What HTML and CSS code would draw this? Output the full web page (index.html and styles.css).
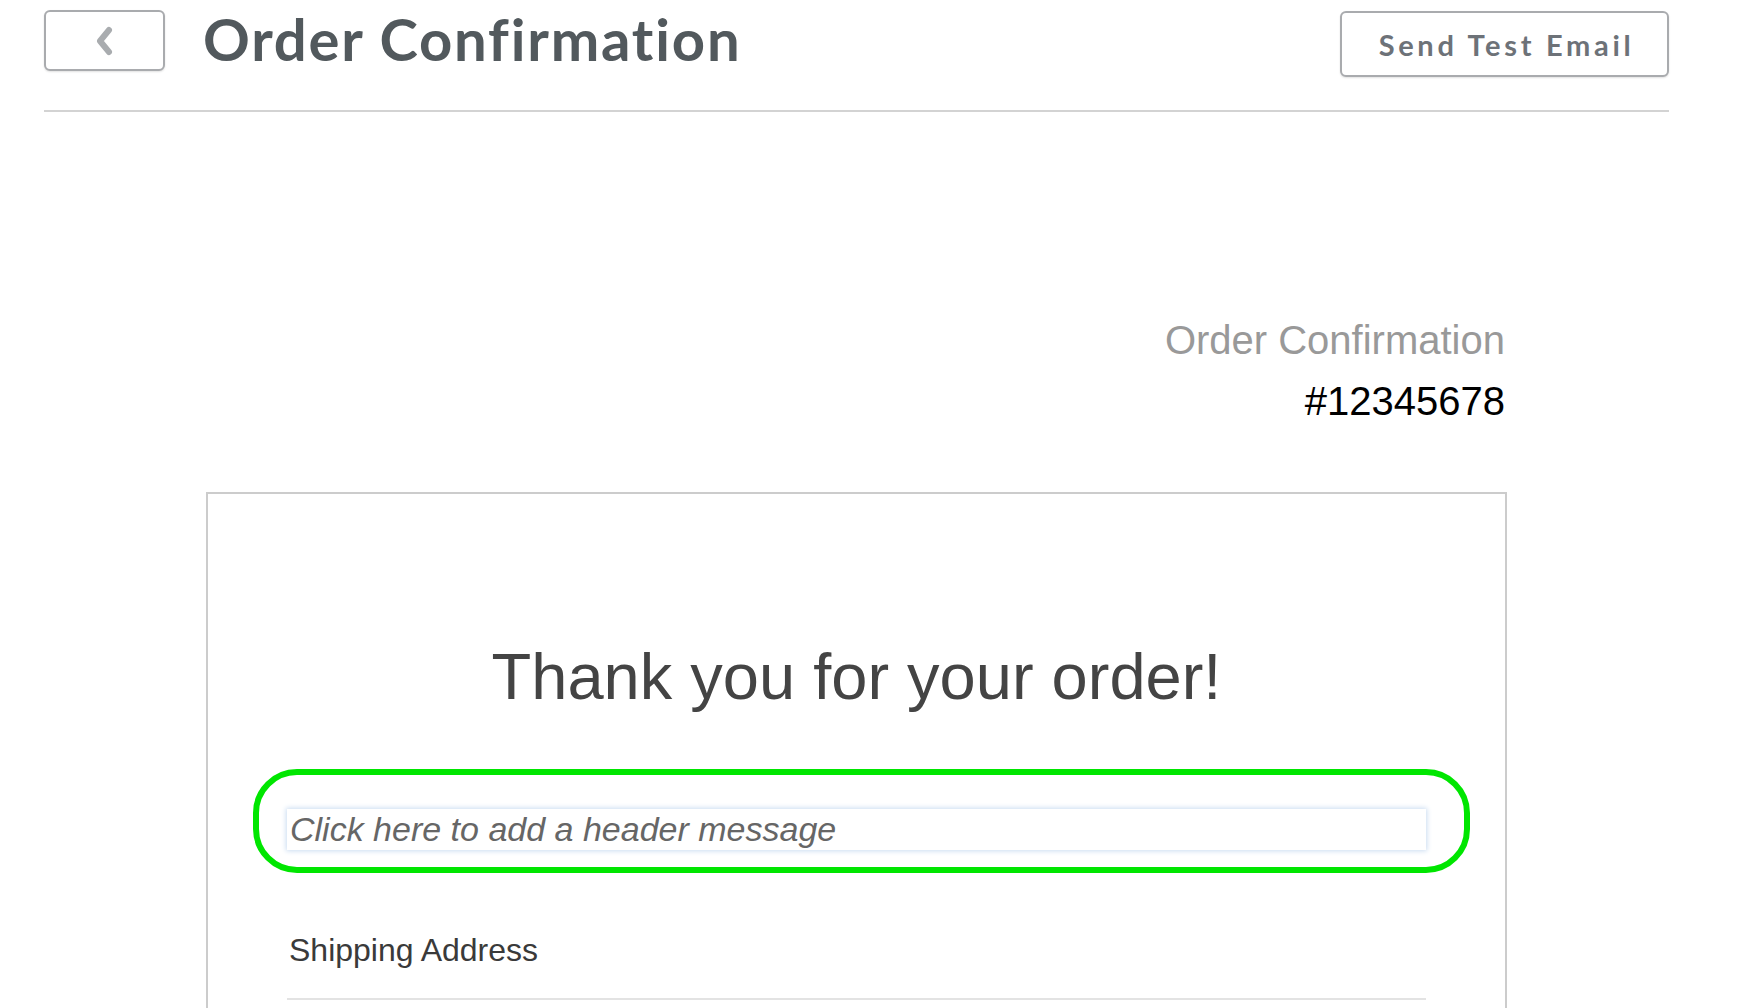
FILE: index.html
```html
<!DOCTYPE html>
<html lang="en">
<head>
<meta charset="utf-8">
<title>Order Confirmation</title>
<link rel="stylesheet" href="styles.css">
</head>
<body>
<header class="topbar">
  <button class="back-btn" type="button" aria-label="Back">
    <svg width="22" height="30" viewBox="0 0 22 30"><polyline points="16,4 7,15 16,26" fill="none" stroke="#a9acaf" stroke-width="6" stroke-linecap="round" stroke-linejoin="round"/></svg>
  </button>
  <h1 class="page-title">Order Confirmation</h1>
  <button class="test-btn" type="button">Send Test Email</button>
</header>
<main class="preview">
  <div class="order-info">
    <div class="order-label">Order Confirmation</div>
    <div class="order-number">#12345678</div>
  </div>
  <section class="email-card">
    <h2 class="thanks">Thank you for your order!</h2>
    <div class="header-msg">
      <div class="msg-input">Click here to add a header message</div>
      <div class="highlight"></div>
    </div>
    <h3 class="section-title">Shipping Address</h3>
    <div class="section-rule"></div>
  </section>
</main>
</body>
</html>
```
FILE: styles.css
```css
html, body {
  margin: 0;
  padding: 0;
  background: #ffffff;
  overflow: hidden;
  height: 1008px;
}
body {
  font-family: "Liberation Sans", Arial, sans-serif;
}
.topbar {
  display: flex;
  align-items: flex-start;
  margin: 0 71px 0 44px;
  padding-top: 10px;
  height: 100px;
  border-bottom: 2px solid #d3d3d3;
}
.back-btn {
  width: 121px;
  height: 61px;
  border: 2px solid #a9abae;
  border-radius: 6px;
  background: #fff;
  box-shadow: 0 1px 2px rgba(0,0,0,0.12);
  display: flex;
  align-items: center;
  justify-content: center;
  padding: 0 2px 0 0;
  margin: 0;
}
.page-title {
  margin: 0 0 0 38px;
  font-family: Lato, "Open Sans", sans-serif;
  font-weight: 700;
  font-size: 58px;
  line-height: 58px;
  color: #52595d;
  letter-spacing: 1.8px;
  flex: 1;
}
.test-btn {
  margin: 1px 0 0 0;
  width: 329px;
  height: 66px;
  border: 2px solid #a9abae;
  border-radius: 6px;
  background: #fff;
  box-shadow: 0 1px 2px rgba(0,0,0,0.12);
  font-family: Lato, "Open Sans", sans-serif;
  font-weight: 700;
  font-size: 29px;
  letter-spacing: 3.7px;
  color: #6d7278;
  padding: 0 0 0 4px;
}
.preview {
  margin-left: 206px;
  width: 1301px;
}
.order-info {
  margin-top: 199px;
  text-align: right;
  padding-right: 2px;
  font-size: 40px;
}
.order-label {
  color: #999999;
  line-height: 58px;
}
.order-number {
  color: #000000;
  line-height: 64px;
}
.email-card {
  margin-top: 59px;
  border: 2px solid #cccccc;
  border-bottom: none;
  padding: 143px 79px 40px;
}
.thanks {
  margin: 0;
  text-align: center;
  font-weight: 400;
  font-size: 65px;
  line-height: 80px;
  color: #444444;
}
.header-msg {
  position: relative;
  margin-top: 92px;
}
.msg-input {
  height: 41px;
  line-height: 41px;
  padding-left: 3px;
  font-size: 34px;
  font-style: italic;
  color: #666666;
  background: #fff;
  box-shadow: 0 0 5px 1px #cadcf1;
}
.highlight {
  position: absolute;
  left: -34px;
  top: -40px;
  right: -44px;
  bottom: -23px;
  border: 6px solid #00e600;
  border-radius: 44px;
  pointer-events: none;
}
.section-title {
  margin: 80px 0 0 2px;
  font-weight: 400;
  font-size: 32px;
  line-height: 40px;
  color: #3a3a3a;
}
.section-rule {
  margin-top: 28px;
  height: 2px;
  background: #e3e3e3;
}
```
